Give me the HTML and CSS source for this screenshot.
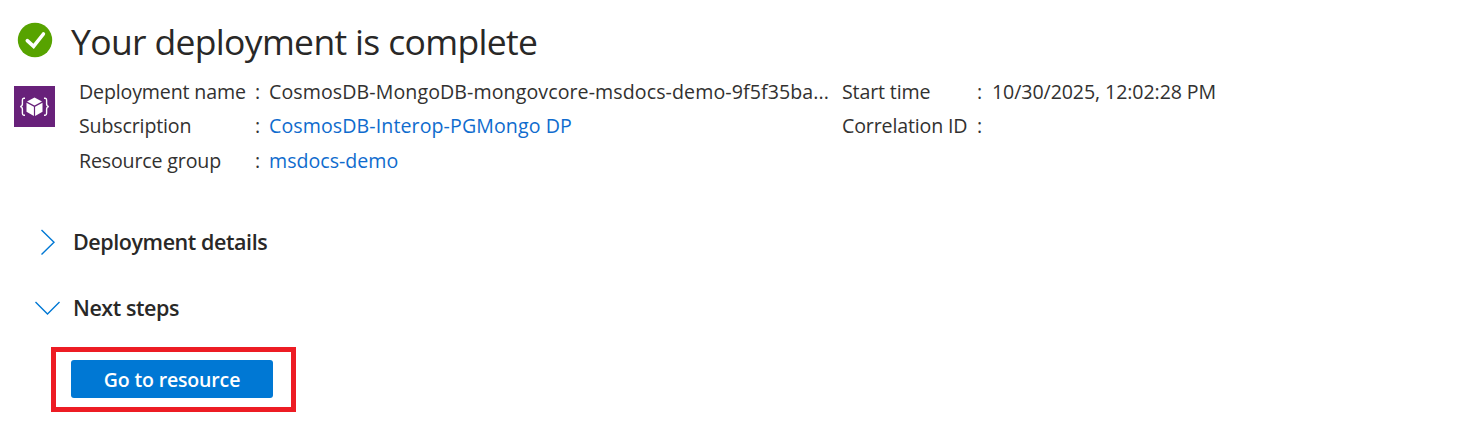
FILE: index.html
```html
<!DOCTYPE html>
<html lang="en">
<head>
<meta charset="utf-8">
<title>Your deployment is complete</title>
<link rel="stylesheet" href="styles.css">
</head>
<body>
<main class="page">
  <header class="header">
    <svg class="status" viewBox="0 0 34 34" aria-hidden="true">
      <circle cx="17" cy="17" r="17.2" fill="#57a300"/>
      <path d="M9.3 17.7 15.6 23.4 25.4 11" fill="none" stroke="#fff" stroke-width="3.6" stroke-linecap="round"/>
    </svg>
    <h1 class="title">Your deployment is complete</h1>
  </header>
  <section class="summary">
    <svg class="template" viewBox="0 0 41 41" aria-hidden="true">
      <path d="M0 0h41v41H0z" fill="#68217a"/>
      <path d="M11 12.2H9.8Q8.4 12.2 8.4 14v4q0 2.4-2.2 2.6 2.2.2 2.2 2.6v4q0 2 1.4 2H11M30 12.2h1.2q1.4 0 1.4 1.8v4q0 2.4 2.2 2.6-2.2.2-2.2 2.6v4q0 2-1.4 2H30" fill="none" stroke="#fff" stroke-width="1.4"/>
      <path d="M20.5 11.5 28 15.5 20.5 19.6 13 15.5zM12.5 16.8l7.4 4V30l-7.4-4.3zM28.5 16.8l-7.4 4V30l7.4-4.3z" fill="#fff"/>
    </svg>
    <dl class="facts facts-main">
      <dt class="label">Deployment name</dt><dd class="colon">:</dd><dd class="value deployment">CosmosDB-MongoDB-mongovcore-msdocs-demo-9f5f35ba...</dd>
      <dt class="label">Subscription</dt><dd class="colon">:</dd><dd class="value"><a class="link account">CosmosDB-Interop-PGMongo DP</a></dd>
      <dt class="label">Resource group</dt><dd class="colon">:</dd><dd class="value"><a class="link">msdocs-demo</a></dd>
    </dl>
    <dl class="facts facts-side">
      <dt class="label">Start time</dt><dd class="colon">:</dd><dd class="value date">10/30/2025, 12:02:28 PM</dd>
      <dt class="label">Correlation ID</dt><dd class="colon">:</dd><dd class="value"></dd>
    </dl>
  </section>
  <section class="section">
    <svg class="chevron" viewBox="0 0 26 26" aria-hidden="true"><path d="M6.5 1 19 13.2 6.5 25.4" fill="none" stroke="#0078d4" stroke-width="1.4"/></svg>
    <h2 class="section-title details">Deployment details</h2>
  </section>
  <section class="section">
    <svg class="chevron" viewBox="0 0 26 26" aria-hidden="true"><path d="M.5 7 12.5 19 24.5 7" fill="none" stroke="#0078d4" stroke-width="1.4"/></svg>
    <h2 class="section-title steps">Next steps</h2>
  </section>
  <div class="highlight"><button class="button">Go to resource</button></div>
</main>
</body>
</html>
```
FILE: styles.css
```css
* { box-sizing: border-box; }
body { margin: 0; background: #fff; color: #323130; font-family: "Open Sans", "Noto Sans", sans-serif; }
.page { height: 441px; padding-top: 15px; overflow: hidden; }
.header { display: flex; height: 60px; padding-left: 18px; }
.status { width: 34px; height: 34px; margin-top: 8px; overflow: visible; }
.title { margin: 0 0 0 19px; color: #292827; font-size: 35.5px; font-weight: 400; line-height: 52px; letter-spacing: -.66px; white-space: nowrap; }
.summary { display: flex; height: 134px; padding-left: 14px; }
.template { width: 41px; height: 41px; margin-top: 11px; }
.facts { display: grid; grid-template-rows: 34px 35px 34px; margin: 0; font-size: 19.6px; line-height: 34px; white-space: nowrap; align-content: start; }
.facts-main { grid-template-columns: 176px 14px 573px; margin-left: 24px; }
.facts-side { grid-template-columns: 135px 15px 260px; }
.label { letter-spacing: -.15px; }
.colon, .value { margin: 0; }
.deployment, .account { letter-spacing: .09px; }
.date { letter-spacing: -.09px; }
.link { color: #0f6cce; }
.section { display: flex; align-items: center; height: 66px; padding-left: 35px; }
.chevron { width: 26px; height: 26px; }
.section-title { margin: 0 0 0 12px; color: #292827; font-size: 21.5px; font-weight: 600; line-height: 30px; letter-spacing: -.43px; }
.highlight { width: 245px; height: 65px; margin: 6px 0 0 51px; padding: 8px 15px; border: 5px solid #ed1c24; }
.button { display: block; width: 202px; height: 38px; padding: 2px 0 0; border: 0; border-radius: 3px; background: #0078d4; color: #fff; font: 600 19.5px/36px "Open Sans", sans-serif; letter-spacing: -.15px; }
```
